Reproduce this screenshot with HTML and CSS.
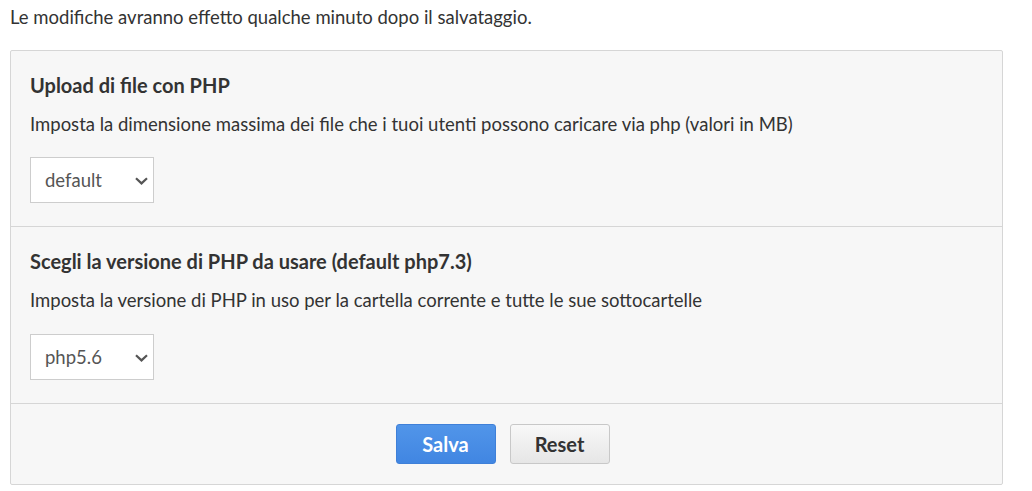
FILE: index.html
```html
<!DOCTYPE html>
<html lang="it">
<head>
<meta charset="utf-8">
<link rel="stylesheet" href="styles.css">
</head>
<body>
<p class="notice">Le modifiche avranno effetto qualche minuto dopo il salvataggio.</p>
<form class="panel">
  <section class="field">
    <h3 class="field-title">Upload di file con PHP</h3>
    <p class="field-desc">Imposta la dimensione massima dei file che i tuoi utenti possono caricare via php (valori in MB)</p>
    <div class="select">
      <span class="select-value">default</span>
      <svg class="chev" width="13" height="8" viewBox="0 0 13 8"><path d="M1 1.2 L6.5 6.4 L12 1.2" fill="none" stroke="#555" stroke-width="2.2"/></svg>
    </div>
  </section>
  <section class="field field-second">
    <h3 class="field-title">Scegli la versione di PHP da usare (default php7.3)</h3>
    <p class="field-desc">Imposta la versione di PHP in uso per la cartella corrente e tutte le sue sottocartelle</p>
    <div class="select">
      <span class="select-value">php5.6</span>
      <svg class="chev" width="13" height="8" viewBox="0 0 13 8"><path d="M1 1.2 L6.5 6.4 L12 1.2" fill="none" stroke="#555" stroke-width="2.2"/></svg>
    </div>
  </section>
  <div class="actions">
    <button type="button" class="btn btn-primary">Salva</button>
    <button type="button" class="btn btn-default">Reset</button>
  </div>
</form>
</body>
</html>
```
FILE: styles.css
```css
html, body {
  margin: 0;
  padding: 0;
  background: #fff;
}
body {
  padding: 6px 29px 0 10px;
  font-family: Lato, "Liberation Sans", sans-serif;
  color: #333;
  font-size: 18.5px;
}
.notice {
  margin: 0;
  line-height: 22px;
}
.panel {
  margin-top: 22px;
  border: 1px solid #d6d6d6;
  background: #f7f7f7;
  border-radius: 2px;
}
.field {
  padding: 22px 19px 23px;
  border-bottom: 1px solid #d6d6d6;
}
.field-second {
  padding-top: 22px;
  padding-bottom: 23px;
}
.field-second .select {
  margin-top: 23px;
}
.field-title {
  margin: 0;
  font-size: 20px;
  font-weight: 700;
  line-height: 24px;
}
.field-desc {
  margin: 16px 0 0;
  line-height: 22px;
}
.select {
  margin-top: 22px;
  width: 124px;
  height: 46px;
  box-sizing: border-box;
  border: 1px solid #cdcdcd;
  background: #fff;
  display: flex;
  align-items: center;
  justify-content: space-between;
  padding: 0 5px 0 14px;
  color: #555;
  font-size: 18.5px;
}
.chev {
  display: block;
  margin-top: 1px;
}
.actions {
  display: flex;
  justify-content: center;
  gap: 14px;
  padding: 20px 8px 20px 0;
}
.btn {
  width: 100px;
  height: 40px;
  border-radius: 3px;
  font-family: Lato, "Liberation Sans", sans-serif;
  font-size: 20px;
  font-weight: 700;
  cursor: pointer;
  padding: 0;
}
.btn-primary {
  color: #fff;
  border: 1px solid #3f80d8;
  background: linear-gradient(#5195e9, #4186e2);
}
.btn-default {
  color: #333;
  border: 1px solid #c8c8c8;
  background: linear-gradient(#f8f8f8, #e6e6e6);
}
```
